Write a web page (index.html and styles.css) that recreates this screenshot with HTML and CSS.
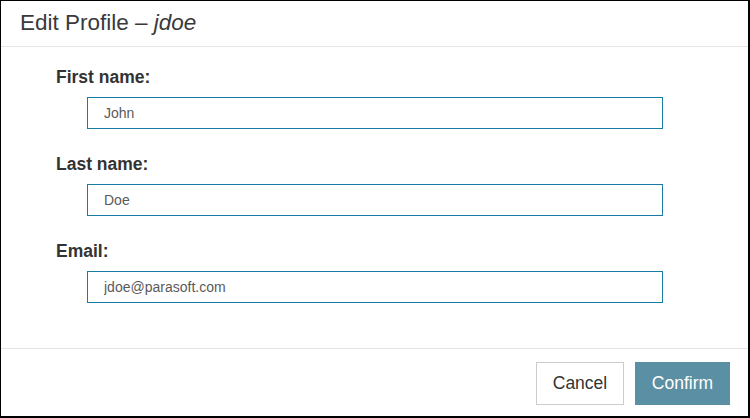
FILE: index.html
```html
<!DOCTYPE html>
<html>
<head>
<meta charset="utf-8">
<link rel="stylesheet" href="styles.css">
</head>
<body>
<div class="dialog">
  <div class="header">Edit Profile – <em>jdoe</em></div>
  <div class="content">
    <div class="field">
      <label class="label">First name:</label>
      <input class="input" type="text" value="John">
    </div>
    <div class="field">
      <label class="label">Last name:</label>
      <input class="input" type="text" value="Doe">
    </div>
    <div class="field">
      <label class="label">Email:</label>
      <input class="input" type="text" value="jdoe@parasoft.com">
    </div>
  </div>
  <div class="footer">
    <button class="btn btn-cancel">Cancel</button>
    <button class="btn btn-confirm">Confirm</button>
  </div>
</div>
</body>
</html>
```
FILE: styles.css
```css
html, body {
  margin: 0;
  padding: 0;
  background: #fff;
}
.dialog {
  width: 750px;
  height: 418px;
  box-sizing: border-box;
  border-style: solid;
  border-color: #000;
  border-width: 1px 2px 2px 1px;
  display: flex;
  flex-direction: column;
  font-family: "Liberation Sans", Arial, sans-serif;
  color: #333;
}
.header {
  height: 45px;
  border-bottom: 1px solid #e5e5e5;
  padding-left: 19px;
  font-size: 22.5px;
  line-height: 44px;
  color: #3a3a3a;
}
.header em {
  font-style: italic;
}
.content {
  flex: 1;
  padding: 19px 0 0 55px;
  display: flex;
  flex-direction: column;
  gap: 24px;
}
.field {
  display: flex;
  flex-direction: column;
  gap: 9px;
}
.label {
  font-weight: bold;
  font-size: 17.5px;
  line-height: 22px;
  color: #333;
}
.input {
  margin-left: 31px;
  width: 576px;
  height: 32px;
  box-sizing: border-box;
  border: 1px solid #1a7aa6;
  border-radius: 0;
  padding: 0 0 0 16px;
  font-family: "Liberation Sans", Arial, sans-serif;
  font-size: 14px;
  color: #5a5a5a;
  outline: none;
}
.footer {
  height: 68px;
  border-top: 1px solid #e5e5e5;
  display: flex;
  justify-content: flex-end;
  align-items: flex-start;
  padding: 13px 18px 0 0;
  gap: 11px;
  box-sizing: border-box;
}
.btn {
  height: 43px;
  font-family: "Liberation Sans", Arial, sans-serif;
  font-size: 17.5px;
  border-radius: 0;
  cursor: pointer;
}
.btn-cancel {
  width: 88px;
  background: #fff;
  border: 1px solid #ccc;
  color: #333;
}
.btn-confirm {
  width: 95px;
  background: #5b8fa3;
  border: 1px solid #5b8fa3;
  color: #fff;
}
```
